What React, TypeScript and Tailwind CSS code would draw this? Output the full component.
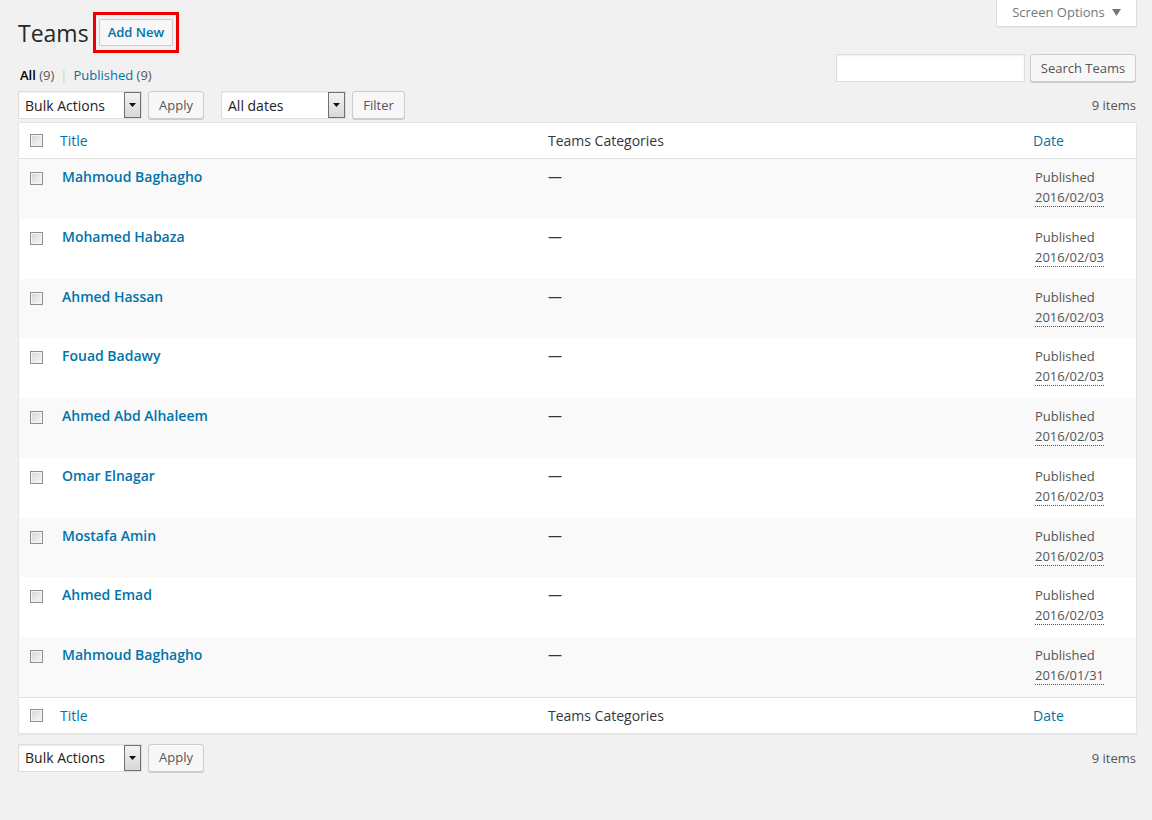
import React from "react";

type Team = { name: string; date: string };

const teams: Team[] = [
  { name: "Mahmoud Baghagho", date: "2016/02/03" },
  { name: "Mohamed Habaza", date: "2016/02/03" },
  { name: "Ahmed Hassan", date: "2016/02/03" },
  { name: "Fouad Badawy", date: "2016/02/03" },
  { name: "Ahmed Abd Alhaleem", date: "2016/02/03" },
  { name: "Omar Elnagar", date: "2016/02/03" },
  { name: "Mostafa Amin", date: "2016/02/03" },
  { name: "Ahmed Emad", date: "2016/02/03" },
  { name: "Mahmoud Baghagho", date: "2016/01/31" },
];

const Checkbox = () => (
  <span className="block w-[13px] h-[13px] border border-[#8f8f8f] bg-gradient-to-br from-[#d6d6d6] to-[#f8f8f8] shadow-[inset_0_0_0_1px_#f4f4f4]" />
);

const Button = ({ label, className = "" }: { label: string; className?: string }) => (
  <button
    className={`h-[28px] px-[8px] whitespace-nowrap border border-[#cccccc] rounded-[3px] bg-[#f7f7f7] shadow-[0_1px_0_#cccccc] text-[13px] text-[#555555] leading-none ${className}`}
  >
    {label}
  </button>
);

const Select = ({ label, width }: { label: string; width: string }) => (
  <div className={`${width} h-[28px] flex items-stretch bg-white border border-[#dddddd] shadow-[inset_0_1px_2px_rgba(0,0,0,0.07)]`}>
    <span className="flex-1 flex items-center pl-[6px] text-[14px] text-[#222222]">{label}</span>
    <span className="w-[17px] border border-[#707070] bg-gradient-to-b from-[#f3f3f3] to-[#d8d8d8] flex items-center justify-center">
      <svg width="7" height="4" viewBox="0 0 7 4">
        <path d="M0 0h7L3.5 4z" fill="#111" />
      </svg>
    </span>
  </div>
);

const HeaderRow = ({ border }: { border: "top" | "bottom" }) => (
  <div
    className={`grid grid-cols-[41px_488px_485px_1fr] items-center h-[36px] ${
      border === "bottom" ? "border-b border-[#e1e1e1]" : "border-t border-[#e1e1e1]"
    }`}
  >
    <div className="pl-[11px]">
      <Checkbox />
    </div>
    <div className="text-[14px] text-[#0073aa]">Title</div>
    <div className="text-[14px] text-[#32373c]">Teams Categories</div>
    <div className="text-[14px] text-[#0073aa]">Date</div>
  </div>
);

export default function App() {
  return (
    <div
      className="min-h-[820px] bg-[#f1f1f1] pl-[18px] pr-[15px] text-[13px] text-[#444444]"
      style={{ fontFamily: '"Open Sans", "Noto Sans", sans-serif' }}
    >
      {/* top row */}
      <div className="flex justify-between items-start h-[54px]">
        <div className="flex items-center pt-[12px]">
          <h1 className="text-[23px] font-normal text-[#23282d] leading-none pt-[1px]">Teams</h1>
          <div className="ml-[4px] border-[3px] border-[#ee0000] px-[3px] py-[4px]">
            <button className="h-[27px] px-[8px] border border-[#cccccc] rounded-[2px] bg-[#f7f7f7] text-[13px] font-semibold text-[#0073aa] leading-none">
              Add New
            </button>
          </div>
        </div>
        <div className="w-[141px] h-[27px] bg-white border border-t-0 border-[#dddddd] shadow-[0_1px_1px_rgba(0,0,0,0.04)] flex items-center justify-center gap-[7px] text-[13px] text-[#72777c]">
          <span>Screen Options</span>
          <svg width="9" height="7" viewBox="0 0 9 7" className="mt-[-1px]">
            <path d="M0 0h9L4.5 7z" fill="#72777c" />
          </svg>
        </div>
      </div>

      {/* filters + search */}
      <div className="flex justify-between items-start h-[37px]">
        <div className="pt-[11px] pl-[2px] text-[13px] leading-[20px]">
          <span className="font-semibold text-black">All</span>
          <span className="text-[#555555]"> (9)</span>
          <span className="text-[#cccccc] mx-[6px]">|</span>
          <span className="text-[#0073aa]">Published</span>
          <span className="text-[#555555]"> (9)</span>
        </div>
        <div className="flex items-center gap-[5px] pr-[1px]">
          <div className="w-[189px] h-[28px] bg-white border border-[#dddddd] shadow-[inset_0_1px_2px_rgba(0,0,0,0.07)]" />
          <Button label="Search Teams" className="w-[106px] text-[#555555]" />
        </div>
      </div>

      {/* tablenav top */}
      <div className="flex items-center justify-between h-[28px]">
        <div className="flex items-center">
          <Select label="Bulk Actions" width="w-[124px]" />
          <Button label="Apply" className="ml-[6px] w-[56px]" />
          <div className="ml-[17px]">
            <Select label="All dates" width="w-[125px]" />
          </div>
          <Button label="Filter" className="ml-[6px] w-[53px]" />
        </div>
        <span className="text-[13px] text-[#555555] pr-[1px] pt-[1px]">9 items</span>
      </div>

      {/* table */}
      <div className="mt-[3px] bg-white border border-[#e5e5e5] shadow-[0_1px_1px_rgba(0,0,0,0.04)]">
        <HeaderRow border="bottom" />
        {teams.map((team, i) => (
          <div
            key={i}
            className={`grid grid-cols-[41px_488px_485px_1fr] items-start h-[59.78px] ${
              i % 2 === 0 ? "bg-[#f9f9f9]" : "bg-white"
            }`}
          >
            <div className="pl-[11px] pt-[13px]">
              <Checkbox />
            </div>
            <div className="pt-[8px] pl-[2px] text-[14px] font-semibold text-[#0073aa] leading-[20px]">
              {team.name}
            </div>
            <div className="pt-[8px] text-[14px] text-[#32373c] leading-[20px]">—</div>
            <div className="pt-[8px] pl-[2px] text-[13px] text-[#555555] leading-[20px]">
              <div>Published</div>
              <div>
                <span className="border-b border-dotted border-[#555555]">{team.date}</span>
              </div>
            </div>
          </div>
        ))}
        <HeaderRow border="top" />
      </div>

      {/* tablenav bottom */}
      <div className="flex items-center justify-between h-[28px] mt-[10px]">
        <div className="flex items-center">
          <Select label="Bulk Actions" width="w-[124px]" />
          <Button label="Apply" className="ml-[6px] w-[56px]" />
        </div>
        <span className="text-[13px] text-[#555555] pr-[1px] pt-[2px]">9 items</span>
      </div>
    </div>
  );
}
